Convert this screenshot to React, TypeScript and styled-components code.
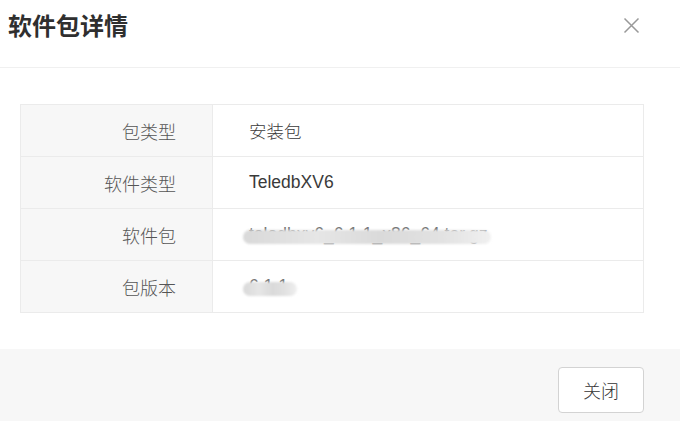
import React from "react";
import styled, { createGlobalStyle } from "styled-components";

const GlobalStyle = createGlobalStyle`
  html, body {
    margin: 0;
    padding: 0;
    background: #fff;
  }
  body {
    font-family: "Liberation Sans", "Noto Sans CJK SC", sans-serif;
    color: #333;
  }
`;

interface detailRow {
  label: string;
  value: string;
  masked?: number;
}

const rows: detailRow[] = [
  { label: "包类型", value: "安装包" },
  { label: "软件类型", value: "TeledbXV6" },
  { label: "软件包", value: "teledbxv6_6.1.1_x86_64.tar.gz", masked: 248 },
  { label: "包版本", value: "6.1.1", masked: 54 },
];

const Dialog = styled.div`
  width: 680px;
  height: 421px;
  overflow: hidden;
  display: flex;
  flex-direction: column;
`;

const Header = styled.div`
  height: 67px;
  border-bottom: 1px solid #f0f0f0;
  display: flex;
  align-items: flex-start;
  justify-content: space-between;
  padding: 0 40px 0 8px;
`;

const Title = styled.h2`
  margin: 0;
  margin-top: 9px;
  font-size: 24px;
  line-height: 32px;
  font-weight: 700;
  color: #2f2f2f;
  font-family: "Noto Sans CJK SC", sans-serif;
`;

const CloseBtn = styled.button`
  margin-top: 17px;
  width: 17px;
  height: 17px;
  padding: 0;
  border: none;
  background: none;
  cursor: pointer;
  display: flex;
`;

const Body = styled.div`
  padding: 36px 36px 36px 20px;
`;

const Table = styled.div`
  border: 1px solid #ebebeb;
  border-bottom: none;
  display: grid;
  grid-template-columns: 192px 1fr;
`;

const Label = styled.div`
  height: 51px;
  border-bottom: 1px solid #ebebeb;
  border-right: 1px solid #ebebeb;
  background: #f7f7f7;
  display: flex;
  align-items: center;
  justify-content: flex-end;
  padding-right: 36px;
  font-size: 18px;
  color: #555;
  font-family: "Noto Sans CJK SC", sans-serif;
  font-weight: 300;
`;

const Value = styled.div`
  height: 51px;
  border-bottom: 1px solid #ebebeb;
  display: flex;
  align-items: center;
  padding-left: 36px;
  font-size: 17.5px;
  color: #3a3a3a;
  font-weight: 300;
`;

const Masked = styled.span`
  position: relative;
  display: inline-block;
  color: #777;
  white-space: nowrap;
`;

const Mosaic = styled.span<{ $w: number }>`
  position: absolute;
  left: -6px;
  top: 6px;
  width: ${(p) => p.$w}px;
  height: 14px;
  border-radius: 8px;
  background: linear-gradient(90deg, #d9d9d9, #e6e6e6 30%, #dadada 55%, #e2e2e2 80%, #f0f0f0);
  filter: blur(1px);
`;

const Footer = styled.div`
  flex: 1;
  background: #f7f7f7;
  display: flex;
  justify-content: flex-end;
  align-items: flex-start;
  padding: 18px 36px 0 0;
`;

const Button = styled.button`
  width: 86px;
  height: 46px;
  border: 1px solid #d3d3d3;
  border-radius: 4px;
  background: #fff;
  font-size: 18px;
  color: #333;
  font-family: "Noto Sans CJK SC", sans-serif;
  font-weight: 300;
  cursor: pointer;
`;

const App: React.FC = () => {
  return (
    <Dialog>
      <GlobalStyle />
      <Header>
        <Title>软件包详情</Title>
        <CloseBtn aria-label="close">
          <svg width="17" height="17" viewBox="0 0 17 17">
            <path d="M1.5 1.5 L15.5 15.5 M15.5 1.5 L1.5 15.5" stroke="#999" strokeWidth="1.5" fill="none" />
          </svg>
        </CloseBtn>
      </Header>
      <Body>
        <Table>
          {rows.map((item) => (
            <React.Fragment key={item.label}>
              <Label>{item.label}</Label>
              <Value>
                {item.masked ? (
                  <Masked>
                    {item.value}
                    <Mosaic $w={item.masked} />
                  </Masked>
                ) : (
                  item.value
                )}
              </Value>
            </React.Fragment>
          ))}
        </Table>
      </Body>
      <Footer>
        <Button>关闭</Button>
      </Footer>
    </Dialog>
  );
};

export default App;
